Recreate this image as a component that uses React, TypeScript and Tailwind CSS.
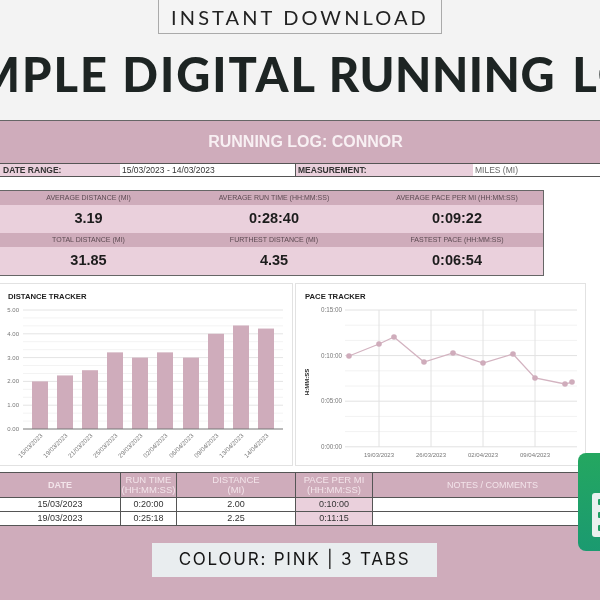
const stats = [
  [
    { label: 'AVERAGE DISTANCE (MI)', value: '3.19' },
    { label: 'AVERAGE RUN TIME (HH:MM:SS)', value: '0:28:40' },
    { label: 'AVERAGE PACE PER MI (HH:MM:SS)', value: '0:09:22' },
  ],
  [
    { label: 'TOTAL DISTANCE (MI)', value: '31.85' },
    { label: 'FURTHEST DISTANCE (MI)', value: '4.35' },
    { label: 'FASTEST PACE (HH:MM:SS)', value: '0:06:54' },
  ],
];

const bars = [
  { date: '15/03/2023', x: 32, v: 2 },
  { date: '19/03/2023', x: 57, v: 2.25 },
  { date: '21/03/2023', x: 82, v: 2.47 },
  { date: '25/03/2023', x: 107, v: 3.22 },
  { date: '29/03/2023', x: 132, v: 3 },
  { date: '02/04/2023', x: 157, v: 3.22 },
  { date: '06/04/2023', x: 183, v: 3 },
  { date: '09/04/2023', x: 208, v: 4 },
  { date: '13/04/2023', x: 233, v: 4.35 },
  { date: '14/04/2023', x: 258, v: 4.22 },
];

// pace points in card coordinates, taken from the picture
const pace = [
  [53, 53], [83, 41], [98, 34], [128, 59], [157, 50], [187, 60], [217, 51], [239, 75], [269, 81], [276, 79],
];

const rows = [
  { date: '15/03/2023', time: '0:20:00', dist: '2.00', pace: '0:10:00' },
  { date: '19/03/2023', time: '0:25:18', dist: '2.25', pace: '0:11:15' },
];

const tableCols = 'grid grid-cols-[120px_56px_119px_77px_1fr]';

function DistanceChart() {
  const y0 = 126;
  const unit = 23.8;
  return (
    <svg width="292" height="162" viewBox="0 0 292 162" className="block">
      {Array.from({ length: 16 }, (_, i) => i).filter((i) => i % 3 !== 0).map((i) => (
        <line key={i} x1="23" x2="283" y1={y0 - (i * unit) / 3} y2={y0 - (i * unit) / 3} stroke="#f3f3f3" strokeWidth="1" />
      ))}
      {[1, 2, 3, 4, 5].map((i) => (
        <line key={i} x1="23" x2="283" y1={y0 - i * unit} y2={y0 - i * unit} stroke="#e4e4e4" strokeWidth="1" />
      ))}
      {[0, 1, 2, 3, 4, 5].map((i) => (
        <text key={i} x="19" y={y0 - i * unit + 2} textAnchor="end" fontSize="6" fill="#777">
          {i.toFixed(2)}
        </text>
      ))}
      {bars.map((b) => (
        <rect key={b.date} x={b.x} y={y0 - b.v * unit} width="16" height={b.v * unit} fill="#cfacbb" />
      ))}
      <line x1="23" x2="283" y1={y0} y2={y0} stroke="#777" strokeWidth="1" />
      {bars.map((b) => (
        <text
          key={b.date}
          x={b.x + 11}
          y={y0 + 7}
          textAnchor="end"
          fontSize="6.3"
          fill="#777"
          transform={`rotate(-45 ${b.x + 11} ${y0 + 7})`}
        >
          {b.date}
        </text>
      ))}
    </svg>
  );
}

function PaceChart() {
  const ticks = [
    { x: 83, label: '19/03/2023' },
    { x: 135, label: '26/03/2023' },
    { x: 187, label: '02/04/2023' },
    { x: 239, label: '09/04/2023' },
  ];
  return (
    <svg width="289" height="162" viewBox="0 0 289 162" className="block">
      {[0, 1, 2, 3, 4, 5, 6, 7, 8, 9].map((i) => (
        <line
          key={i}
          x1="49"
          x2="281"
          y1={7 + i * 15.2}
          y2={7 + i * 15.2}
          stroke={i % 3 === 0 ? '#e2e2e2' : '#f2f2f2'}
          strokeWidth="1"
        />
      ))}
      {ticks.map((t) => (
        <g key={t.label}>
          <line x1={t.x} x2={t.x} y1="7" y2="144" stroke="#e2e2e2" strokeWidth="1" />
          <text x={t.x} y="154" textAnchor="middle" fontSize="6" fill="#777">{t.label}</text>
        </g>
      ))}
      {['0:15:00', '0:10:00', '0:05:00', '0:00:00'].map((l, i) => (
        <text key={l} x="46" y={9 + i * 45.6} textAnchor="end" fontSize="6.3" fill="#777">{l}</text>
      ))}
      <text
        x="13"
        y="79"
        textAnchor="middle"
        fontSize="6"
        fontWeight="700"
        fill="#222"
        transform="rotate(-90 13 79)"
      >
        H:MM:SS
      </text>
      <polyline points={pace.map((p) => p.join(',')).join(' ')} fill="none" stroke="#d3b3c0" strokeWidth="1.3" />
      {pace.map(([x, y]) => (
        <circle key={x} cx={x} cy={y} r="2.8" fill="#cfacbb" />
      ))}
    </svg>
  );
}

function SheetsIcon() {
  return (
    <div className="absolute left-[578px] top-[453px] h-[98px] w-[40px] rounded-[8px] bg-gradient-to-b from-[#24a760] to-[#1b9a70] pl-[14px] pt-[40px]">
      <div className="flex h-[44px] w-[30px] flex-col gap-[7px] rounded-[3px] bg-[#e9f1ee] pl-[6px] pt-[6px]">
        <div className="h-[6px] w-full rounded-[1px] bg-[#1f9e62]" />
        <div className="h-[6px] w-full rounded-[1px] bg-[#1f9e62]" />
        <div className="h-[6px] w-full rounded-[1px] bg-[#1f9e62]" />
      </div>
    </div>
  );
}

export default function App() {
  return (
    <div className="relative flex h-[600px] w-[600px] flex-col overflow-hidden bg-white font-['Liberation_Sans',sans-serif] blur-[0.3px]">
      {/* banner */}
      <div className="flex h-[120px] shrink-0 flex-col items-center overflow-hidden bg-[#f3f3f3]">
        <div className="-mt-px flex h-[35px] w-[284px] shrink-0 items-center justify-center border border-[#aaaaaa] bg-[#f4f4f4] pt-px font-['Lato',sans-serif] text-[20px] tracking-[0.155em] text-[#222]">
          INSTANT DOWNLOAD
        </div>
        <div className="ml-[5px] mt-[12px] whitespace-nowrap font-['Lato',sans-serif] text-[47px] font-black leading-[56px] tracking-[2px] text-[#1d2423]">
          SIMPLE DIGITAL <span className="mr-[4px] tracking-[0.5px]">RUNNING</span> LOG
        </div>
      </div>

      {/* sheet title */}
      <div className="flex h-[43px] shrink-0 items-center justify-center border-t border-[#666] bg-[#cfacbb] pl-[11px] text-[16px] font-bold text-[#f8f0f3]">
        RUNNING LOG: CONNOR
      </div>
      <div className="grid h-[14px] shrink-0 grid-cols-[120px_175px_178px_1fr] items-center border-y border-[#555] text-[8.5px] leading-[12px]">
        <div className="bg-[#ead0dc] pl-[3px] font-bold text-[#333]">DATE RANGE:</div>
        <div className="pl-[2px] text-[#333]">15/03/2023 - 14/03/2023</div>
        <div className="border-l border-[#555] bg-[#ead0dc] pl-[2px] font-bold text-[#333]">MEASUREMENT:</div>
        <div className="pl-[2px] text-[#666]">MILES (MI)</div>
      </div>

      {/* summary */}
      <div className="mt-[13px] w-[544px] shrink-0 border-y border-r border-[#666]">
        {stats.map((row, i) => (
          <div key={i}>
            <div className="grid h-[14px] grid-cols-[177px_194px_1fr] items-center bg-[#cfacbb] text-center text-[7px] text-[#5c4a52]">
              {row.map((s) => <div key={s.label}>{s.label}</div>)}
            </div>
            <div className="grid h-[28px] grid-cols-[177px_194px_1fr] items-center bg-[#ead0dc] text-center text-[14.5px] font-bold text-[#1c1c1c]">
              {row.map((s) => <div key={s.label}>{s.value}</div>)}
            </div>
          </div>
        ))}
      </div>

      {/* charts */}
      <div className="mt-[7px] flex h-[183px] shrink-0 gap-[2px]">
        <div className="h-full w-[293px] border border-l-0 border-[#e2e2e2]">
          <div className="h-[19px] pl-[8px] pt-[8px] text-[7.7px] font-bold leading-[10px] text-[#222]">DISTANCE TRACKER</div>
          <DistanceChart />
        </div>
        <div className="h-full w-[291px] border border-[#e2e2e2]">
          <div className="h-[19px] pl-[9px] pt-[8px] text-[7.7px] font-bold leading-[10px] text-[#222]">PACE TRACKER</div>
          <PaceChart />
        </div>
      </div>

      {/* log table */}
      <div className="mt-[6px] flex min-h-0 flex-1 flex-col bg-[#cfacbb]">
        <div className={`${tableCols} h-[26px] border-y border-[#555] text-center text-[9.5px] leading-[10.5px] text-[#f3e4ea]`}>
          <div className="flex items-center justify-center text-[9px] font-bold">DATE</div>
          <div className="flex items-center justify-center border-l border-[#555]">RUN TIME<br />(HH:MM:SS)</div>
          <div className="flex items-center justify-center border-l border-[#555]">DISTANCE<br />(MI)</div>
          <div className="flex items-center justify-center border-l border-[#555]">PACE PER MI<br />(HH:MM:SS)</div>
          <div className="flex items-center justify-center border-l border-[#555] pl-[12px] text-[9px]">NOTES / COMMENTS</div>
        </div>
        {rows.map((r) => (
          <div key={r.date} className={`${tableCols} h-[14px] border-b border-[#555] bg-white text-center text-[9px] leading-[13px] text-[#333]`}>
            <div>{r.date}</div>
            <div className="border-l border-[#555]">{r.time}</div>
            <div className="border-l border-[#555]">{r.dist}</div>
            <div className="border-l border-[#555] bg-[#ead0dc]">{r.pace}</div>
            <div className="border-l border-[#555]" />
          </div>
        ))}
        <div className="ml-[152px] mt-[17px] flex h-[34px] w-[285px] items-center justify-center bg-[#e9edef] font-['Inter',sans-serif] text-[17px] tracking-[0.105em] text-[#151515]">
          COLOUR: PINK | 3 TABS
        </div>
      </div>

      <SheetsIcon />
    </div>
  );
}
